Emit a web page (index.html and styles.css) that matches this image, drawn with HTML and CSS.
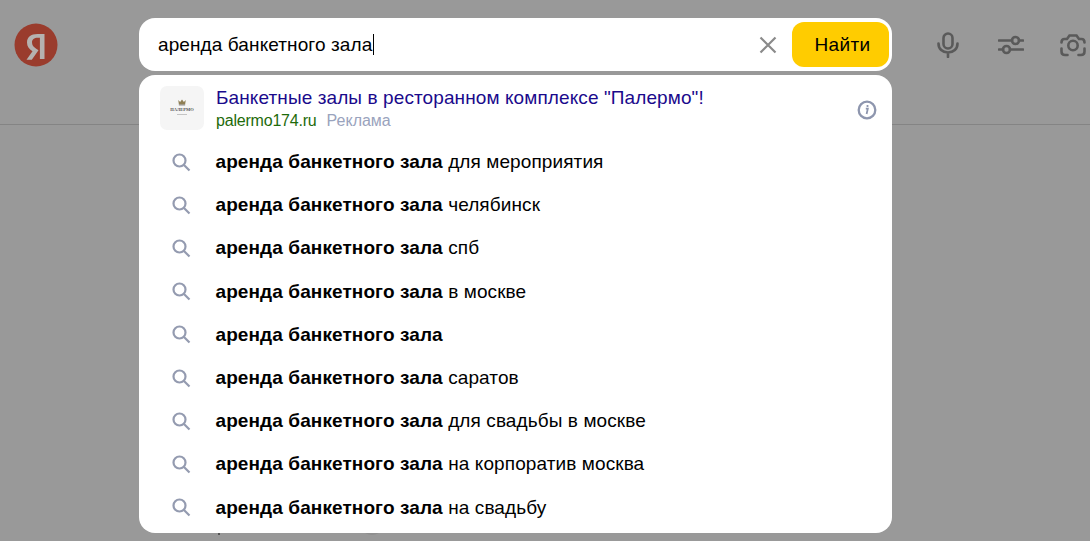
FILE: index.html
```html
<!DOCTYPE html>
<html lang="ru">
<head>
<meta charset="utf-8">
<title>аренда банкетного зала</title>
<link rel="stylesheet" href="styles.css">
</head>
<body>
<header class="header">
  <svg class="logo" width="44" height="44" viewBox="0 0 44 44">
    <circle cx="22" cy="22" r="21.500" fill="#9a3c2d"/>
    <path class="logo-ya" d="M28 35h-4.600V13.200h-2.100c-3.800 0-5.800 1.900-5.800 4.700 0 3.200 1.400 4.700 4.200 6.600l2.300 1.500-6.700 9.900H10l6-8.900c-3.500-2.500-5.500-4.900-5.500-9 0-5.100 3.600-8.600 10.700-8.600H28z" transform="translate(2.500 2) scale(1 .97)"/>
  </svg>
  <div class="search-col">
    <form class="search">
      <span class="query">аренда банкетного зала</span><span class="caret"></span>
      <svg class="clear" width="18" height="18" viewBox="0 0 18 18"><path d="M1.500 1.500l15 15M16.500 1.500l-15 15"/></svg>
      <button class="find" type="button">Найти</button>
    </form>
    <span class="peek-dot"></span>
    <span class="peek-arc"></span>
    <div class="suggest">
      <a class="ad">
        <span class="ad-thumb">
          <svg width="10" height="7" viewBox="0 0 16 10"><path d="M2 1l3 3 3-4 3 4 3-3-1 7H3z" fill="#8f7f55"/><path d="M3 9h10" stroke="#555" stroke-width="1"/></svg>
          <span class="ad-brand">ПАЛЕРМО</span>
          <span class="ad-sub"></span>
        </span>
        <span class="ad-text">
          <span class="ad-title">Банкетные залы в ресторанном комплексе "Палермо"!</span>
          <span class="ad-meta"><span class="ad-domain">palermo174.ru</span><span class="ad-label">Реклама</span></span>
        </span>
        <svg class="info" width="20" height="20" viewBox="0 0 20 20"><circle cx="10" cy="10" r="8.300"/><path class="info-i" d="M8.800 8.700h2l-1.200 5.300M10.500 5v2"/></svg>
      </a>
      <ul class="list">
        <li class="item"><svg class="mag" width="20" height="20" viewBox="0 0 20 20"><circle cx="8.500" cy="8.500" r="6"/><path d="M13 13l5.500 5.500"/></svg><span><b>аренда банкетного зала</b> для мероприятия</span></li>
        <li class="item"><svg class="mag" width="20" height="20" viewBox="0 0 20 20"><circle cx="8.500" cy="8.500" r="6"/><path d="M13 13l5.500 5.500"/></svg><span><b>аренда банкетного зала</b> челябинск</span></li>
        <li class="item"><svg class="mag" width="20" height="20" viewBox="0 0 20 20"><circle cx="8.500" cy="8.500" r="6"/><path d="M13 13l5.500 5.500"/></svg><span><b>аренда банкетного зала</b> спб</span></li>
        <li class="item"><svg class="mag" width="20" height="20" viewBox="0 0 20 20"><circle cx="8.500" cy="8.500" r="6"/><path d="M13 13l5.500 5.500"/></svg><span><b>аренда банкетного зала</b> в москве</span></li>
        <li class="item"><svg class="mag" width="20" height="20" viewBox="0 0 20 20"><circle cx="8.500" cy="8.500" r="6"/><path d="M13 13l5.500 5.500"/></svg><span><b>аренда банкетного зала</b></span></li>
        <li class="item"><svg class="mag" width="20" height="20" viewBox="0 0 20 20"><circle cx="8.500" cy="8.500" r="6"/><path d="M13 13l5.500 5.500"/></svg><span><b>аренда банкетного зала</b> саратов</span></li>
        <li class="item"><svg class="mag" width="20" height="20" viewBox="0 0 20 20"><circle cx="8.500" cy="8.500" r="6"/><path d="M13 13l5.500 5.500"/></svg><span><b>аренда банкетного зала</b> для свадьбы в москве</span></li>
        <li class="item"><svg class="mag" width="20" height="20" viewBox="0 0 20 20"><circle cx="8.500" cy="8.500" r="6"/><path d="M13 13l5.500 5.500"/></svg><span><b>аренда банкетного зала</b> на корпоратив москва</span></li>
        <li class="item"><svg class="mag" width="20" height="20" viewBox="0 0 20 20"><circle cx="8.500" cy="8.500" r="6"/><path d="M13 13l5.500 5.500"/></svg><span><b>аренда банкетного зала</b> на свадьбу</span></li>
      </ul>
    </div>
  </div>
  <div class="tools">
    <svg class="tool" width="24" height="26" viewBox="0 0 24 26"><rect x="7.500" y="1.500" width="9" height="15" rx="4.500"/><path d="M2.500 11.500c0 5.500 4 9 9.500 9s9.500-3.500 9.500-9M12 20.500V25"/></svg>
    <svg class="tool" width="26" height="22" viewBox="0 0 26 22"><path d="M1 6.500h13M21 6.500h4M1 15.500h4M12 15.500h13"/><circle cx="17.500" cy="6.500" r="3.500"/><circle cx="8.500" cy="15.500" r="3.500"/></svg>
    <svg class="tool tool-camera" width="26" height="24" viewBox="0 0 26 24"><circle cx="13" cy="12.500" r="4.700"/><path d="M1.500 9.500c0-2.200 1-3.500 3-3.500h2.500l2.500-3.500h7L19 6h2.500c2 0 3 1.300 3 3.500M1.500 15.500v3c0 2 1 3.500 3.500 3.500h2.500M24.500 15.500v3c0 2-1 3.500-3.500 3.500h-2.500"/></svg>
  </div>
</header>
</body>
</html>
```

FILE: styles.css
```css
* { box-sizing: border-box; }
html, body { margin: 0; height: 100%; overflow: hidden; }
body {
  background: #999;
  font-family: "Liberation Sans", Arial, sans-serif;
  color: #000;
}
.header {
  display: flex;
  align-items: flex-start;
  height: 125px;
  border-bottom: 1px solid #848484;
  padding: 18px 0 0 14px;
}
.logo { flex: none; margin: 5px 81px 0 0; }
.logo-ya { fill: #b5b2b0; }
.search-col { flex: none; width: 753px; position: relative; }
.search {
  display: flex;
  align-items: center;
  height: 53px;
  padding: 0 3px 0 19px;
  background: #fff;
  border-radius: 16px;
}
.query { font-size: 19px; line-height: 24px; letter-spacing: .1px; }
.caret { width: 1px; height: 21px; background: #000; margin-left: 1px; }
.clear { margin-left: auto; margin-right: 15px; fill: none; stroke: #8a8a8a; stroke-width: 2.200; }
.find {
  width: 97px;
  height: 45px;
  border: 0;
  border-radius: 12px;
  background: #fc0;
  font: 19px "Liberation Sans", Arial, sans-serif;
  letter-spacing: .4px;
  color: #000;
  padding: 0 0 0 4px;
}
.peek-dot {
  position: absolute;
  left: 79px;
  top: 513px;
  width: 2px;
  height: 4px;
  background: #555;
}
.peek-arc {
  position: absolute;
  left: 224px;
  top: 505px;
  width: 18px;
  height: 12px;
  border-radius: 50%;
  background: #8f8f8f;
}
.suggest {
  position: absolute;
  top: 57px;
  left: 0;
  width: 753px;
  height: 458px;
  overflow: hidden;
  background: #fff;
  border-radius: 16px;
}
.ad {
  display: flex;
  align-items: center;
  height: 65px;
  padding: 0 15px 0 21px;
}
.ad-thumb {
  flex: none;
  width: 44px;
  height: 44px;
  margin-right: 12px;
  border-radius: 7px;
  background: #f5f5f5;
  display: flex;
  flex-direction: column;
  align-items: center;
  padding-top: 13px;
}
.ad-brand { font: 700 4.500px/6px "Liberation Serif", serif; color: #555; margin-top: 1px; }
.ad-sub { width: 10px; height: 1px; margin-top: 1px; background: #c4c4c4; }
.ad-text { flex: 1; display: flex; flex-direction: column; padding-top: 5px; }
.ad-title { font-size: 19px; line-height: 22px; letter-spacing: .1px; color: #1a0a8c; margin-top: -1px; }
.ad-meta { font-size: 16px; line-height: 22px; margin-top: 1px; }
.ad-domain { color: #1e6b0a; letter-spacing: -.2px; }
.ad-label { color: #9aa3bd; margin-left: 10px; }
.info { flex: none; margin-top: 4px; fill: none; stroke: #8e96ae; stroke-width: 2.300; }
.info-i { stroke-width: 1.800; }
.list { list-style: none; margin: 0; padding: 0; }
.item {
  display: flex;
  align-items: center;
  height: 43.200px;
  padding-left: 32px;
  font-size: 19px;
  letter-spacing: .1px;
}
.item span { margin: 1px 0 0 24.500px; white-space: nowrap; }
.mag { flex: none; fill: none; stroke: #949bb0; stroke-width: 2.200; }
.tools {
  flex: none;
  display: flex;
  align-items: center;
  gap: 38px;
  height: 53px;
  margin-left: 44px;
}
.tool { flex: none; fill: none; stroke: #5a5a5a; stroke-width: 2.600; stroke-linecap: round; }
.tool-camera { margin-left: -2px; }
```
